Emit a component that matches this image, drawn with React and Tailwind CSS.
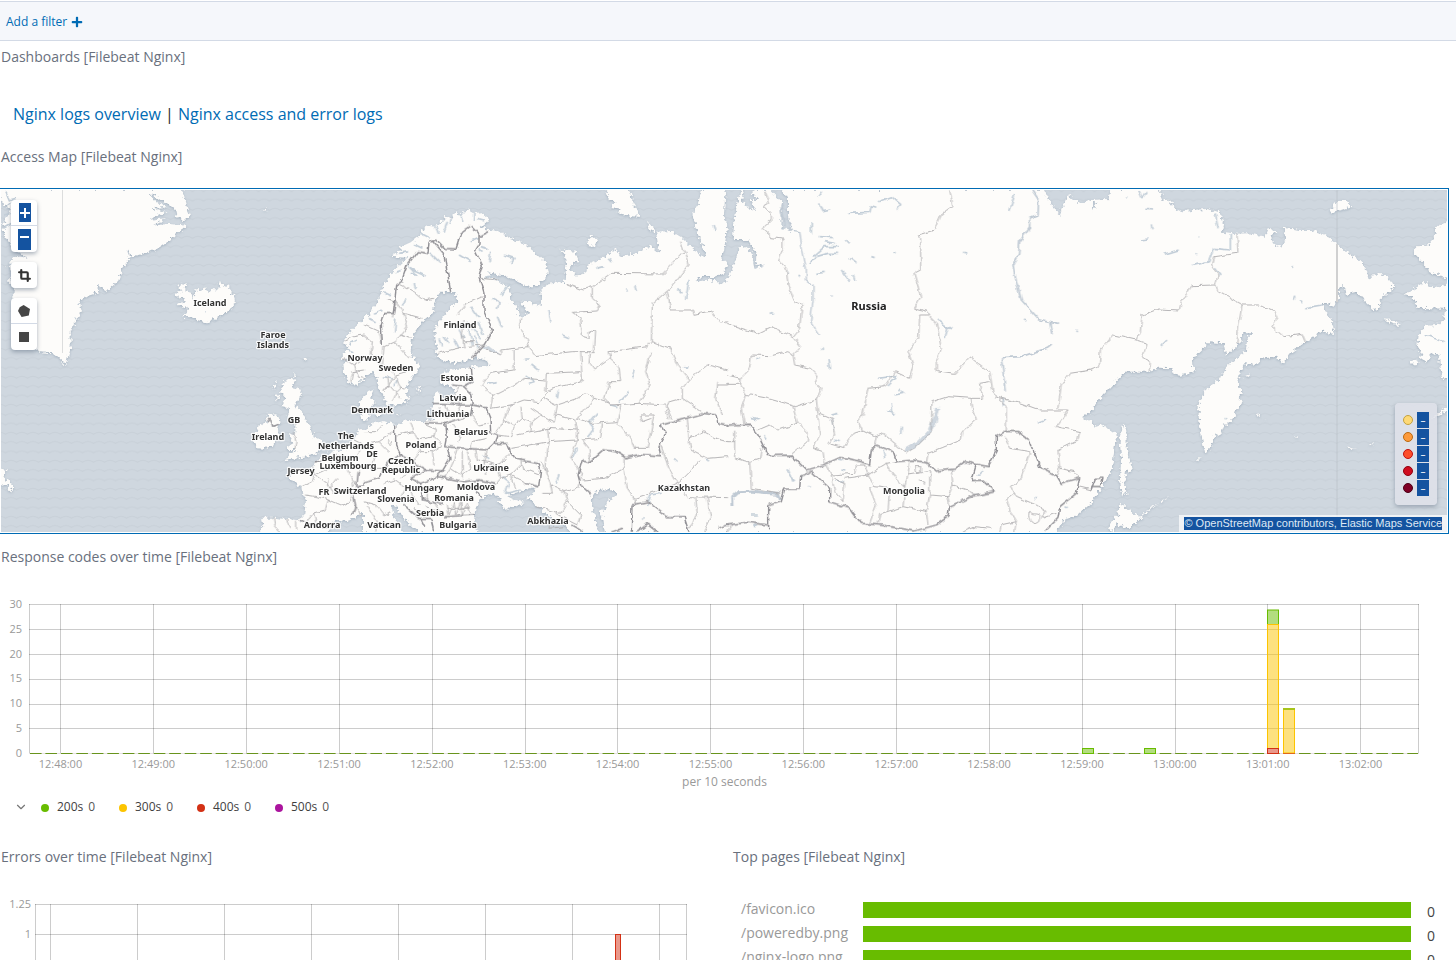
import React from "react";
import { FaPlus } from "react-icons/fa";
import { Crop, ChevronDown } from "lucide-react";

const LAND = [
  [
    "M-3 12 L545 12 L560 60 L570 102 L545 105 L530 92 L524 70 L495 55 L452 25 L462 48 L498 66 L455 70 L500 82 L448 104 L498 100 L456 122 L505 116 L562 122 L522 155 L482 187 L440 205 L395 215 L382 193 L388 222 L370 245 L355 287 L322 318 L290 300 L296 322 L262 332 L238 350 L246 378 L230 405 L212 440 L212 484 L197 540 L175 516 L160 505 L120 502 L100 480 L60 400 L35 332 L48 318 L24 288 L40 270 L22 240 L45 212 L80 218 L40 190 L18 160 L8 120 L30 70 L4 50 Z",
    "M540 293 L560 297 L556 315 L574 320 L578 345 L590 308 L600 322 L612 308 L628 318 L642 308 L652 318 L660 288 L672 305 L688 298 L688 316 L702 330 L705 350 L695 375 L670 384 L650 400 L620 412 L590 405 L575 397 L550 396 L566 372 L545 362 L528 358 L558 348 L525 328 L545 318 L532 303 Z",
    "M855 587 L887 583 L875 606 L906 614 L900 640 L880 664 L900 672 L914 700 L930 725 L942 755 L968 768 L964 792 L945 808 L915 815 L884 818 L850 832 L870 808 L890 795 L862 795 L866 782 L880 775 L866 752 L886 742 L886 708 L862 695 L870 672 L845 665 L856 640 L840 618 Z",
    "M800 690 L832 688 L842 712 L832 724 L836 748 L824 776 L795 792 L772 790 L762 768 L770 742 L776 720 L800 712 Z",
    "M826 590 L830 606 L818 618 Z M788 82 L802 68 L798 78 Z M914 518 L920 522 L915 532 Z M880 564 L886 572 L880 576 Z M830 626 L838 634 L828 650 Z",
    "M1095 398 L1062 430 L1042 452 L1028 470 L1046 488 L1028 508 L1032 560 L1045 592 L1066 602 L1080 590 L1095 582 Z",
    "M1095 636 L1078 650 L1082 680 L1088 705 L1095 712 Z",
    "M1095 733 L1075 738 L1062 764 L1040 792 L1000 800 L962 815 L945 835 L935 856 L905 854 L862 872 L874 886 L904 905 L906 925 L918 946 L912 992 L900 1006 L860 1002 L820 998 L785 998 L790 1020 L778 1045 L982 1045 L990 1022 L1005 1004 L1040 1008 L1060 1000 L1095 980 Z",
    "M-3 850 L20 855 L14 882 L38 895 L35 920 L20 898 L-3 905 Z",
  ],
  [
    "M-3 400 L20 382 L40 350 L60 300 L88 258 L130 218 L80 216 L112 196 L104 188 L140 172 L168 150 L172 134 L200 120 L222 122 L245 95 L262 98 L276 78 L292 92 L310 72 L330 84 L345 78 L376 105 L350 125 L405 140 L440 160 L480 175 L510 200 L545 235 L552 270 L520 302 L490 305 L450 285 L420 272 L372 262 L405 290 L432 305 L440 325 L438 350 L458 360 L465 395 L496 388 L470 350 L500 352 L530 366 L533 312 L560 295 L602 290 L607 240 L600 205 L588 194 L636 200 L642 228 L615 246 L635 272 L665 265 L672 240 L700 228 L740 205 L755 190 L768 215 L815 205 L860 182 L886 206 L876 140 L920 138 L950 155 L975 180 L1015 214 L1025 208 L1010 170 L995 130 L985 85 L1000 60 L1015 12 L1085 12 L1080 90 L1090 120 L1080 200 L1072 220 L1090 235 L1082 262 L1050 276 L1008 276 L998 290 L1040 283 L1070 296 L1095 290 L1095 1045 L722 1045 L718 1000 L703 977 L722 972 L730 950 L755 935 L752 912 L700 915 L680 948 L690 985 L706 1045 L622 1045 L600 1020 L560 1000 L520 962 L490 940 L510 920 L514 906 L470 918 L430 935 L450 945 L482 955 L440 965 L425 978 L405 950 L410 940 L385 925 L350 940 L335 970 L330 1010 L342 1045 L172 1045 L150 1030 L120 1000 L100 970 L82 958 L90 1000 L120 1045 L-3 1045 L-3 738 L30 715 L60 708 L95 720 L130 704 L180 712 L213 700 L205 670 L210 640 L217 615 L240 642 L270 625 L264 604 L228 595 L235 565 L270 553 L325 546 L375 540 L365 522 L330 520 L275 535 L245 530 L215 515 L218 480 L210 440 L225 410 L250 380 L280 350 L275 322 L230 320 L212 345 L207 385 L175 410 L145 450 L140 500 L152 520 L168 552 L145 575 L130 602 L130 640 L110 660 L72 662 L60 640 L45 610 L40 578 L24 560 L-3 585 Z",
    "M-3 638 L12 618 L28 612 L22 640 L32 650 L10 680 L20 700 L-3 712 Z M36 676 L56 672 L52 694 L34 692 Z M160 606 L172 602 L162 630 Z M132 636 L136 636 L128 662 Z M96 686 L106 690 L98 694 Z",
    "M725 12 L735 45 L755 50 L742 66 L770 72 L762 84 L796 92 L828 96 L810 60 L795 12 Z M670 165 L685 150 L702 166 L690 186 L674 184 Z M850 108 L876 132 L868 140 L852 128 Z",
  ],
  [
    "M40 12 L30 45 L20 100 L14 165 L60 165 L85 205 L84 235 L105 243 L80 252 L70 202 L40 180 L30 200 L20 240 L-3 282 L-3 1045 L985 1045 L1010 1004 L1050 990 L1095 950 L1095 705 L1062 700 L1095 674 L1095 45 L1050 54 L1020 30 L1008 60 L995 92 L965 50 L945 12 L160 12 L180 40 L180 95 L192 138 L160 130 L162 50 L125 12 L86 12 L70 22 L90 45 L66 45 L84 75 L60 70 L40 45 L50 12 Z",
  ],
  [
    "M-3 90 L12 55 L-3 45 L50 42 L55 12 L200 12 L215 45 L232 44 L258 80 L300 75 L345 72 L380 82 L396 110 L390 140 L430 146 L470 145 L520 155 L530 130 L545 130 L556 142 L535 150 L545 178 L570 186 L580 165 L575 125 L620 135 L660 135 L700 150 L740 180 L770 205 L800 225 L825 255 L830 288 L850 265 L880 270 L908 305 L885 325 L862 345 L866 370 L845 376 L820 352 L810 335 L795 320 L765 327 L755 300 L740 305 L742 340 L725 362 L690 355 L705 388 L718 400 L728 444 L690 440 L640 472 L600 500 L570 536 L555 515 L505 522 L490 540 L460 535 L445 560 L436 590 L448 620 L440 640 L450 655 L430 680 L425 705 L395 720 L385 745 L365 755 L360 785 L340 806 L330 760 L320 700 L320 655 L345 610 L380 585 L410 540 L462 498 L465 460 L480 445 L450 445 L445 475 L402 512 L395 475 L350 472 L320 500 L300 530 L308 558 L265 572 L245 565 L240 550 L200 548 L165 560 L100 560 L60 602 L-3 670 Z",
    "M-3 730 L30 718 L56 735 L75 748 L68 785 L60 850 L40 890 L-3 955 Z",
    "M95 715 L103 740 L105 800 L123 855 L102 862 L96 905 L112 930 L98 922 L90 938 L84 880 L88 820 L82 760 Z",
    "M85 952 L110 975 L145 995 L135 1010 L105 1032 L70 1015 L66 1045 L48 1032 L65 1000 L78 990 Z",
    "M1072 108 L1045 118 L1030 132 L1025 160 L1005 182 L970 184 L968 206 L1000 240 L1015 265 L1040 268 L1072 285 Z",
    "M942 326 L1005 288 L1012 308 L1072 298 L1072 372 L975 368 L964 340 Z",
    "M1072 374 L1058 385 L1055 405 L1035 420 L1000 422 L980 450 L975 490 L990 500 L984 520 L1004 532 L1020 500 L1040 512 L1045 545 L1050 582 L1072 575 Z",
    "M713 78 L735 48 L765 48 L778 65 L750 74 L715 83 Z M875 403 L900 405 L928 420 L905 418 Z M950 530 L975 526 L980 536 L960 540 Z M460 572 L474 568 L464 578 Z M1010 705 L1055 670 L1072 675 L1040 690 Z M492 682 L504 692 L502 700 Z M520 700 L528 706 L518 704 Z M610 752 L620 758 L612 758 Z M768 788 L796 788 L772 792 Z M830 778 L850 774 L836 780 Z M312 830 L330 812 L316 832 Z M140 998 L200 952 L150 998 Z M205 950 L230 934 L210 952 Z",
  ],
];

const NATIONAL = [
  "M800 712 L810 700 L818 724 L836 718 M945 835 L975 820 L1010 815 L1040 812 M1075 860 L1070 905 L1092 902 M1060 925 L1066 960 L1058 990 M900 1006 L940 1020 L985 1030",
  "M55 480 L52 420 L62 385 L88 385 L98 300 L112 290 L130 240 L160 200 L192 205 L195 172 L215 165 L240 190 L275 192 L290 145 L322 122 L345 145 L345 175 L332 195 L355 240 L345 275 L360 325 L360 380 L385 435 L360 480 L322 518 M205 168 L240 210 L252 270 L260 322 M345 155 L375 140 M322 545 L325 590 L300 605 L320 625 L325 660 L365 668 L378 700 L380 742 L400 750 L390 775 L430 775 L440 800 L455 822 L520 835 L530 855 L524 905 L485 895 M265 600 L300 605 M205 655 L240 655 L290 660 L325 660 M180 712 L245 715 L250 760 L245 785 L370 795 L390 775 M245 715 L290 700 L320 690 L325 660 M95 722 L95 780 L110 810 L190 855 L235 858 L258 820 L250 790 M110 810 L72 830 L45 880 L-3 895 M190 855 L140 880 L170 895 L225 875 L300 890 L345 885 L330 905 L350 935 M235 858 L215 880 M170 895 L175 945 L240 955 M240 995 L330 990 M115 955 L165 1000 L200 1000 L210 1041 M170 1000 L180 1020 M345 885 L395 895 M622 1020 L660 1041 M1092 720 L1062 715 L1055 690 L1020 685 L890 722 L905 745 L885 785 L890 812 L830 808 L785 818 L755 800 L720 795 L680 830 L655 825 L642 870 L650 900 L682 930 M802 1041 L804 960 L850 950 L910 995 L960 995 L975 1041 M745 1041 L780 1028 M820 1041 L850 1018 L880 1041 M1060 1030 L1092 1020",
  "M-3 720 L65 718 L90 750 L120 812 L190 810 L235 855 L285 840 L335 818 L360 820 L425 838 L430 795 L445 780 L495 800 L505 830 L560 825 L600 835 L625 858 L680 852 L710 830 L745 838 L780 845 L805 800 L805 755 L830 740 L870 740 L905 765 L935 845 L985 870 L1000 895 L1055 878 L1045 925 L995 965 L990 1000 L950 1040 M745 838 L730 890 L765 888 L800 920 L730 935 L665 965 L660 995 L625 1020 L560 1038 L460 1020 L400 1015 L365 970 L305 950 L305 910 L250 858 L218 870 L215 912 L170 912 L160 950 L122 962 L122 1030 M-3 1020 L60 1012 L122 1020",
  "M-3 915 L10 880 L30 880 L25 905 L-3 905",
];

const REGIONAL = [
  "M1035 465 L1060 455 L1092 450 M1030 520 L1060 540 L1092 520 M1052 590 L1058 560 L1092 555 M1062 540 L1075 575 L1092 580 M880 745 L888 770 L884 795 M880 705 L888 720 M938 842 L945 870 L990 850 L995 820 M905 905 L935 890 L945 870 L985 900 L1000 925 L1045 920 L1065 890 L1040 850 L1000 850 M918 930 L950 935 L985 945 L975 975 L940 985 L920 1010 M985 945 L1020 960 L1055 950 L1050 925 M990 905 L1010 880 M820 998 L825 1025 L840 1041 M860 1002 L870 1030 M890 1010 L890 1035 M1000 800 L1020 830 L1060 830 L1080 800 M1060 764 L1092 780 M940 985 L950 1020 M985 880 L980 905 M1066 960 L1085 990",
  "M105 298 L150 320 L180 345 L210 340 M70 345 L95 350 L120 385 L175 400 M95 350 L85 400 M120 385 L130 425 L110 450 L140 460 M60 485 L95 470 L110 450 M60 485 L55 540 L95 570 L130 560 M95 470 L135 520 M0 420 L45 440 L55 480 M0 450 L25 470 L20 520 L55 540 M60 620 L95 570 L110 610 L125 612 M75 600 L110 640 M70 575 L75 600 L60 620 M85 650 L95 625 L110 610 M280 390 L310 355 L355 335 M300 405 L295 450 L300 490 M220 505 L260 495 L300 485 L360 480 M300 470 L330 470 M350 280 L405 285 M605 295 L655 315 L685 305 L740 265 L895 267 L960 200 L950 170 M965 200 L975 240 L920 310 L865 355 L862 470 L850 485 L735 500 L740 520 L690 555 L675 535 L680 500 M685 305 L685 340 L708 360 L700 378 L625 382 L650 400 L655 455 L675 460 L675 438 L692 440 L688 500 L625 500 L515 512 L495 485 L410 495 L410 510 L365 495 M910 320 L920 375 L985 375 L990 388 L1040 378 L1070 415 L1092 410 M470 400 L465 430 L490 460 L495 485 M862 470 L920 490 L945 545 L975 585 L1030 540 L1092 555 M862 500 L845 560 L858 600 L825 655 M975 585 L955 610 L955 640 L920 650 L905 680 L915 700 M955 640 L1020 685 M735 520 L765 545 L770 590 L735 590 L722 640 L740 660 L825 655 L905 660 L925 705 M650 500 L655 590 L560 610 L545 620 L550 565 L650 560 M450 495 L450 555 L380 565 L355 600 L385 635 L455 600 L480 580 M385 635 L380 670 L440 660 L480 645 L525 650 L560 615 M480 580 L545 585 M440 660 L420 705 L395 745 M420 705 L450 725 L475 700 L470 665 M450 725 L440 755 L400 750 M475 700 L505 710 L500 740 L460 750 M505 710 L530 690 L500 670 M530 690 L570 715 L580 660 L540 640 M500 740 L550 730 L555 770 L440 790 M550 730 L640 735 L640 765 L555 770 M640 735 L635 705 L575 690 M580 660 L640 640 L665 625 L690 640 L640 700 L680 715 L760 710 L770 660 M690 640 L740 655 M760 710 L800 760 L810 790 L850 790 L870 690 L830 690 L835 710 L862 700 M715 715 L710 760 L655 765 L675 790 L680 830 M640 765 L620 820 L655 870 L640 910 L600 920 L560 900 L545 860 L550 800 L555 770 M550 860 L530 830 M560 900 L565 925 L535 925 M600 920 L610 950 L590 985 L515 965 M610 950 L650 990 L640 1020 L600 1000 M655 885 L725 880 L780 850 L780 820 M780 850 L790 910 L812 940 L885 915 L940 895 L1005 830 M890 780 L915 850 L940 895 L970 935 L1092 938 M970 700 L975 760 L1020 740 L1055 760 L1092 770 M975 760 L980 795 L1030 820 L1092 815 M995 938 L1000 990 L975 1030 M1030 938 L1040 1000 L1020 1041 M812 940 L815 960 M1062 590 L1055 640 L1075 690 M1062 600 L1092 600 M285 605 L270 640 L290 660 L280 680 M225 670 L235 690 L250 700 M245 655 L255 695 M320 690 L345 720 L370 715 M265 720 L290 760 L280 770 M320 795 L325 770 L370 760 M100 750 L150 740 L160 765 L210 755 L215 730 L180 715 M150 740 L140 710 M160 765 L170 800 L145 830 M210 755 L235 780 L205 800 L210 840 M170 800 L205 800 M0 740 L40 740 L55 720 M0 780 L45 770 L75 800 M45 770 L90 740 M40 800 L20 850 L60 850 M75 765 C65 775 80 780 82 768 M100 830 L130 860 L110 880 M280 790 L260 850 L290 870 M295 800 L295 880 M310 800 L320 850 L295 870 M260 850 L240 880 M370 795 L360 830 L400 840 L430 820 M335 795 L340 825 L360 830 L365 870 M440 800 L400 840 M440 870 L470 840 M470 826 L475 850 L525 870 M400 840 L410 880 L440 870 L485 895 M60 895 L90 885 L125 910 L110 940 M0 925 L40 915 M0 950 L35 960 L60 990 L80 980 M10 960 L40 1010 L35 1040 M190 905 L190 950 M140 920 L165 960 M250 960 L255 990 L270 950 L275 990 L290 950 L295 990 L310 955 L320 985 M185 965 L230 980 M205 945 L225 975 M250 970 L320 970 M150 970 L185 990 M560 1000 L555 1030 L600 1025 M575 985 L600 1000 M410 880 L385 910 M440 870 L455 910",
  "M110 20 L122 55 L105 65 L130 90 L130 105 L102 132 L130 158 L165 162 L165 190 L152 225 L175 250 L180 300 L200 350 L222 358 L215 430 L195 455 L220 485 L195 510 L200 540 L250 550 L270 570 L262 595 L280 610 L265 645 L200 665 L170 655 L110 638 L55 628 L38 600 L40 575 L65 550 L70 510 L130 512 L180 500 L195 510 M-3 415 L40 430 L90 445 L130 425 L195 455 M-3 570 L38 580 M-3 598 L35 598 M55 628 L40 670 L48 715 M195 665 L210 715 L150 735 L125 720 L90 735 M210 715 L240 745 L238 770 L190 808 M265 645 L270 690 L275 750 L255 790 L285 800 L290 835 M275 685 L310 700 L320 750 L300 775 L345 788 L375 745 L405 735 L445 755 L440 780 M400 735 L390 710 L405 690 L420 610 L470 605 L500 560 L545 580 L555 540 L540 500 L572 460 L575 390 L605 390 L600 380 L560 370 L578 335 L558 265 L578 255 L578 160 L570 150 L620 135 L640 90 L675 65 L665 15 M605 395 L625 415 L640 490 L625 530 L625 560 L680 568 L725 515 L770 550 L785 560 L795 620 L835 665 L835 740 M445 755 L465 745 L535 805 L570 780 L610 740 L612 650 L660 635 L730 640 L735 680 L748 700 L705 740 L700 765 L600 805 L595 835 M730 640 L760 640 L755 595 L785 590 M800 635 L880 655 L935 675 L1020 675 L985 725 L1055 740 L1050 765 L990 795 L995 850 L985 870 M990 670 L1000 600 L1025 565 L1092 555 M995 850 L1040 860 L1055 878 M20 740 L20 820 L60 830 L95 820 L100 790 M65 830 L70 910 L160 925 M-3 770 L20 770 M295 840 L310 870 L380 865 L385 840 L410 840 M310 870 L320 920 L345 950 M320 880 L350 895 L345 950 M350 880 L420 870 L440 905 L485 910 L480 980 L455 985 L450 1020 M440 905 L425 910 L445 960 L425 1015 M410 840 L420 870 L475 835 L495 870 L530 905 L540 870 L600 860 M475 835 L505 830 M540 870 L545 830 M530 905 L525 965 L480 980 M525 965 L595 980 L600 1020 M605 855 L605 930 L595 980 M605 930 L660 935 L665 965 M660 935 L675 900 L670 855 M675 900 L720 915 L740 930 M560 845 L578 845 L578 860 L562 860 Z M570 885 L590 888 L588 898 M830 755 L845 790 L905 800 L880 880 L850 905 L860 925 L835 945 L850 985 L865 1010 L860 1041 M860 925 L865 935 L925 960 L950 975 L945 1000 L985 985 M865 1010 L820 1020 L815 1041 M705 1041 L740 1025 L790 1030 M910 975 C890 990 910 1030 935 1010 C950 970 900 1000 910 975 M1092 915 L1050 905 M-3 1041 L10 1020",
  "M435 145 L438 205 L365 215 L358 240 L378 270 L370 300 L300 302 L268 350 L262 375 L200 372 L150 390 L145 440 L132 465 L65 450 L25 495 L22 545 L-3 555 M132 465 L165 475 L150 520 L175 530 L172 558 M370 300 L378 320 L450 360 L440 420 L435 475 M450 360 L500 360 L545 380 L555 400 L540 425 L575 455 L630 448 L640 472",
];

const LAKES = [
  "M1034 490 L1060 500 M1032 530 L1052 524 M1045 478 L1070 465 M615 376 L616 382 M20 60 L40 50 M12 90 L36 84 M10 130 L32 118 M25 240 L50 235 L60 250 M30 265 L55 275 M18 20 L28 45 L48 40 M250 350 L236 356 M225 400 L238 402",
  "M130 235 L150 255 L185 270 M140 265 L155 270 M150 295 L155 310 M125 340 L115 365 M95 400 L92 440 M100 580 L90 605 M60 575 L85 582 M200 205 L230 235 M285 210 L320 230 M345 190 L355 200 M320 170 L345 160 M380 200 L375 235 M420 210 L450 220 L440 235 M350 185 L370 190 M435 300 L410 330 M385 340 L405 350 L400 375 M400 395 L415 430 M360 280 L395 275 M320 365 L345 400 M310 410 L325 480 M325 425 L350 460 M345 410 L358 450 M330 450 L345 490 M240 455 L255 475 M285 430 L300 460 M225 460 L235 485 M270 460 L285 490 M555 375 L560 410 M595 450 L615 458 M480 525 L500 525 M505 540 L525 555 M485 570 L510 590 L495 595 M375 595 L395 590 M583 620 L580 640 M810 550 L805 580 M795 620 L765 650 M760 665 L740 660 M700 685 L675 715 L690 735 L670 760 M640 790 L625 820 M585 870 L575 895 M850 960 L860 930 L890 925 M835 1000 L840 1005 M930 820 L940 830 M1020 822 L1035 828 M815 300 L820 315 M785 310 L790 320 M960 545 L970 548 M975 285 L965 345 M940 310 L955 325 M1050 120 L1055 135 M700 250 L720 245 M735 220 L745 232 M360 810 L372 825 M415 875 L435 890 L425 925 L470 915 M140 250 L160 275 M105 205 L135 200 M150 178 L175 190 M170 145 L200 160 M215 125 L225 150 M262 98 L258 120 M292 92 L296 112 M330 84 L328 105 M250 110 L240 140 M95 262 L115 255 M60 320 L80 330 M30 385 L55 375 M12 400 L35 410 M360 105 L340 100",
  "M250 115 L250 145 M245 235 L265 215 L300 205 L330 205 M255 215 L290 185 L330 185 M275 155 L315 158 M265 265 L290 262 M340 255 L365 290 M365 220 L385 235 M375 270 L380 285 M430 215 L440 218 M500 200 L505 205 M705 202 L718 204 M125 385 L135 383 M180 260 L182 264 M208 275 L214 275 M310 330 L314 330 M355 165 L365 175 M290 170 L320 175 M640 415 L660 430 L650 460 M650 420 L670 432 M630 405 L645 415 M895 405 L888 402 M1045 435 L1050 437 M450 580 L505 572 M480 600 L505 575 M500 630 L525 625 L510 610 M490 655 L495 690 M475 680 L500 685 M520 725 L518 750 M465 795 L470 820 M330 825 L345 828 M325 885 L345 890 M340 855 L355 858 M750 870 L765 855 M930 715 L955 705 M70 700 L90 705 M110 750 L118 762 M180 850 L195 890 M185 875 L200 888 M240 905 L248 905 M70 990 L90 990 M75 1022 L90 1020 M925 940 L920 942 M1010 965 L1016 968 M310 690 L330 685 M318 765 L332 770 M85 520 L95 522 M280 490 L284 495 M300 525 L305 550 M280 20 L270 35 M275 55 L285 80 L310 75 M360 85 L425 82 L430 65 L445 70 M450 50 L490 35 L515 55 L505 75 M860 30 L845 75",
  "M160 70 L185 72 M178 115 L180 130 M145 165 L168 162 M215 208 L260 195 M300 242 L350 230 L365 190 L415 195 L415 150 M210 480 L225 465 M600 243 L602 246 M605 345 L612 332 M625 345 L632 355 M640 372 L660 365 L690 360 M370 250 L385 270 M370 85 L378 130 M398 700 L402 702 M310 210 L312 208 M1000 450 L1055 470 M105 35 L108 38 M140 15 L150 38 L165 20 M320 155 L322 156",
];

const LABELS = [
  ["Iceland", 210, 306], ["Faroe", 273, 338], ["Islands", 273, 348],
  ["Norway", 365, 361], ["Sweden", 396, 371], ["Finland", 460, 328],
  ["Estonia", 457, 381], ["Latvia", 453, 401], ["Lithuania", 448, 417],
  ["Belarus", 471, 435], ["Denmark", 372, 413], ["GB", 294, 423],
  ["Ireland", 268, 440], ["The", 346, 439], ["Netherlands", 346, 449],
  ["DE", 372, 457], ["Poland", 421, 448], ["Belgium", 340, 461],
  ["Luxembourg", 348, 469], ["Czech", 401, 464], ["Republic", 401, 473],
  ["Ukraine", 491, 471], ["Jersey", 301, 474], ["FR", 324, 495],
  ["Switzerland", 360, 494], ["Hungary", 424, 491], ["Moldova", 476, 490],
  ["Slovenia", 396, 502], ["Romania", 454, 501], ["Serbia", 430, 516],
  ["Andorra", 322, 528], ["Vatican", 384, 528], ["Bulgaria", 458, 528],
  ["Abkhazia", 548, 524], ["Kazakhstan", 684, 491], ["Mongolia", 904, 494],
];

function MapDrawing() {
  return (
    <svg
      className="block h-full w-full font-['Noto_Sans','Open_Sans',sans-serif]"
      viewBox="1 190 1446 342"
      preserveAspectRatio="xMidYMid slice"
      role="img"
      aria-label="Access map"
    >
      <defs>
        <pattern id="waves" width="11" height="9.33" patternUnits="userSpaceOnUse">
          <rect width="11" height="9.33" fill="#cfd7df" />
          <path d="M0 3 Q2.75 3.2 5.5 5 Q8.25 3.2 11 3" fill="none" stroke="#c8d0d8" strokeWidth="1.1" />
        </pattern>
        <filter id="coast" filterUnits="userSpaceOnUse" x="-10" y="180" width="1480" height="365" colorInterpolationFilters="sRGB">
          <feTurbulence type="fractalNoise" baseFrequency="0.28" numOctaves="2" seed="7" result="n" />
          <feDisplacementMap in="SourceGraphic" in2="n" scale="7" xChannelSelector="R" yChannelSelector="G" result="land" />
          <feDropShadow in="land" dx="0" dy="1" stdDeviation="1.2" floodColor="#8fa0b0" floodOpacity="0.6" />
        </filter>
        <filter id="wiggle" filterUnits="userSpaceOnUse" x="-10" y="180" width="1480" height="365" colorInterpolationFilters="sRGB">
          <feTurbulence type="fractalNoise" baseFrequency="0.14" numOctaves="2" seed="4" result="w" />
          <feDisplacementMap in="SourceGraphic" in2="w" scale="5" xChannelSelector="R" yChannelSelector="G" />
        </filter>
      </defs>
      <rect x="-400" y="0" width="2400" height="800" fill="url(#waves)" />
      <g filter="url(#coast)">
        <g transform="translate(0 185) scale(0.33333)" fill="#fdfcfa">
          {LAND.map((paths, i) => (
            <g key={i} transform={`translate(${i * 1092} 0)`}>
              {paths.map((d) => <path key={d} d={d} />)}
            </g>
          ))}
        </g>
      </g>
      <g filter="url(#wiggle)">
        <g transform="translate(0 185) scale(0.33333)" fill="none" strokeLinejoin="round">
          {LAKES.map((d, i) => (
            <path key={i} d={d} transform={`translate(${i * 1092} 0)`} stroke="#c3ced8" strokeWidth="5" />
          ))}
          <g transform="translate(2184 0)" stroke="#c0cad4">
            <path d="M185 135 L215 140 L222 190 L235 250 L235 285 L255 300 L255 350 L248 410 L275 450" strokeWidth="4" />
            <path d="M915 15 L932 40 L930 90 L905 100 L905 125 L875 170 L872 210 L855 240 L865 290 L880 345 L935 405 L990 418 M965 412 L972 445 M968 480 L955 490 L880 515 L820 518 M820 520 L825 560 L832 620 M825 640 L830 665" strokeWidth="5" />
            <path d="M625 670 L635 670 L625 712 L600 752 L560 790 L530 800 L535 788 L570 768 L600 735 L616 700 Z" fill="#cfd7df" strokeWidth="2" />
            <path d="M15 960 L14 935 L30 920 L70 918 L100 922 L150 925 L158 945" strokeWidth="9" />
            <path d="M165 60 C150 90 175 90 170 120" strokeWidth="6" />
            <path d="M310 700 L318 740" strokeWidth="4" />
          </g>
          <path d="M1446 485 L1462 480 L1500 510 L1470 500 Z" fill="#cfd7df" />
          {REGIONAL.map((d, i) => (
            <path key={i} d={d} transform={`translate(${i * 1092} 0)`} stroke="#b0afb2" strokeWidth="2.8" />
          ))}
          {NATIONAL.map((d, i) => (
            <path key={i} d={d} transform={`translate(${i * 1092} 0)`} stroke="#929196" strokeWidth="4.4" />
          ))}
        </g>
      </g>
      <path d="M62.5 190 V353" stroke="#dcdddd" />
      <path d="M1337 190 V532" stroke="#b9c1c8" strokeOpacity="0.7" />
      <path d="M1337 244 V302" stroke="#d0d0d0" strokeWidth="2" />
      <g fontSize="9" fontWeight="700" fill="#333" stroke="#fff" strokeWidth="2.4" strokeOpacity="0.85" strokeLinejoin="round" paintOrder="stroke" textAnchor="middle">
        {LABELS.map(([name, x, y]) => (
          <text key={name} x={x} y={y}>{name}</text>
        ))}
        <text x="869" y="310" fontSize="11" fill="#222">Russia</text>
      </g>
    </svg>
  );
}

const controlGroup = "flex w-[26px] flex-col overflow-hidden rounded bg-white shadow-[0_2px_4px_rgba(90,105,125,0.5)]";
const controlButton = "flex h-[26px] items-center justify-center";

function MapControls() {
  return (
    <div className="absolute top-[10px] left-[10px] flex flex-col gap-[10px]">
      <div className={controlGroup}>
        <button aria-label="Zoom in" className={controlButton + " border-b border-[#d3dae6]"}>
          <span className="ml-[2px] flex h-[19px] w-3 items-center justify-center bg-[#1453a0] text-white">
            <svg width="12" height="12" viewBox="0 0 12 12" aria-hidden="true"><path d="M6 1V11M1 6H11" stroke="currentColor" strokeWidth="2" /></svg>
          </span>
        </button>
        <button aria-label="Zoom out" className={controlButton}>
          <span className="flex h-[21px] w-[13px] items-center justify-center bg-[#1453a0] text-white">
            <svg width="13" height="12" viewBox="0 0 13 12" aria-hidden="true"><path d="M2 4H11" stroke="currentColor" strokeWidth="2" /></svg>
          </span>
        </button>
      </div>
      <div className={controlGroup}>
        <button aria-label="Fit data bounds" className={controlButton}>
          <Crop size={13} strokeWidth={4} color="#333" aria-hidden="true" />
        </button>
      </div>
      <div className={controlGroup}>
        <button aria-label="Draw a polygon" className={controlButton + " border-b border-[#d3dae6]"}>
          <svg width="12" height="12" viewBox="0 0 12 12" aria-hidden="true"><path d="M5.6 0L12 4L10.8 10.600L3.600 12L0 6L1.700 2.200Z" fill="#464646" /></svg>
        </button>
        <button aria-label="Draw a rectangle" className={controlButton}>
          <svg width="10" height="10" viewBox="0 0 10 10" aria-hidden="true"><rect width="10" height="10" fill="#464646" /></svg>
        </button>
      </div>
    </div>
  );
}

const HEAT = [
  ["#fed976", "#c2a040"], ["#fd9a3c", "#b96a10"], ["#fc4e2a", "#c01010"], ["#d00d20", "#90000f"], ["#800026", "#4c0016"],
];

function MapPanel() {
  return (
    <div className="mt-[15px] mr-[7px] h-[346px] border-y border-r border-[#006bb4] p-px">
      <div className="relative h-full overflow-hidden">
        <MapDrawing />
        <MapControls />
        <ul className="absolute right-[10px] bottom-[27px] flex h-[102px] w-[42px] flex-col justify-center gap-px rounded bg-[#dfe2ea]/85 pl-2 shadow-[0_2px_4px_rgba(90,105,125,0.45)]">
          {HEAT.map(([fill, edge]) => (
            <li key={fill} className="flex items-center gap-1">
              <svg width="10" height="10" viewBox="0 0 10 10" aria-hidden="true"><circle cx="5" cy="5" r="4.500" fill={fill} stroke={edge} /></svg>
              <span className="h-4 w-3 bg-[#1453a0] text-center font-['Open_Sans',sans-serif] text-[10px] leading-4 text-white">–</span>
            </li>
          ))}
        </ul>
        <div className="absolute right-0 bottom-0 bg-white/70 px-[5px] py-[2px] font-['Liberation_Sans',sans-serif] text-[11px] leading-[13px] text-[#dfe9f5]">
          <span className="block bg-[#1453a0]">
            © <a href="#osm">OpenStreetMap contributors</a>, <a href="#ems">Elastic Maps Service</a>
          </span>
        </div>
      </div>
    </div>
  );
}

const Title = ({ children }) => (
  <h2 className="h-8 pl-px text-[14px] leading-8 text-[#69707d]">{children}</h2>
);

const TICKS = Array.from({ length: 15 }, (_, i) => i);
const tickX = (i) => Math.floor(31.9 + i * 92.85) + 0.5;
const timeLabel = (i) => (i < 12 ? `12:${48 + i}:00` : `13:0${i - 12}:00`);

function ResponsePlot() {
  return (
    <svg className="block h-[150px] w-full" viewBox="0 0 1390 150" preserveAspectRatio="none" role="img" aria-label="Response codes over time">
      <g stroke="#000" strokeOpacity="0.2" fill="none">
        {[0, 25, 50, 75, 100, 124].map((y) => <path key={y} d={`M0 ${y + 0.5}H1390`} />)}
        {TICKS.map((i) => <path key={i} d={`M${tickX(i)} 0V150`} />)}
        <path d="M0.500 0V150M1389.500 0V150" />
      </g>
      <path d="M0 149.500H1390" stroke="#e6e0e4" />
      <path d="M1 149.500H1389" stroke="#68bc00" strokeDasharray="11.5 3.976" />
      <path d="M1 149.500H1389" stroke="#6b4b52" strokeOpacity="0.35" strokeDasharray="11.5 3.976" />
      <g fill="#68bc00" fillOpacity="0.5" stroke="#68bc00">
        <rect x="1053.5" y="144.500" width="11" height="5" />
        <rect x="1115.5" y="144.500" width="11" height="5" />
        <rect x="1238.5" y="6" width="11" height="14.500" />
      </g>
      <g fill="#fcc400" fillOpacity="0.5" stroke="#fcc400">
        <rect x="1238.5" y="20.500" width="11" height="124" />
        <rect x="1254.5" y="105" width="11" height="44" />
      </g>
      <path d="M1254 105H1266" stroke="#a8c41a" strokeWidth="2" />
      <path d="M1254 149.500H1266" stroke="#e0681a" />
      <rect x="1238.5" y="144.500" width="11" height="5" fill="#d33115" fillOpacity="0.5" stroke="#d33115" />
    </svg>
  );
}

const SERIES = [["200s", "bg-[#68bc00]"], ["300s", "bg-[#fcc400]"], ["400s", "bg-[#d33115]"], ["500s", "bg-[#ab149e]"]];

function ResponseChart() {
  return (
    <div className="pt-[23px]">
      <div className="flex pr-[37px]">
        <ul className="flex h-[165px] w-[29px] flex-col justify-between pr-[7px] text-right text-[11px] leading-4 text-[#999]">
          {[30, 25, 20, 15, 10, 5, 0].map((v) => <li key={v}>{v}</li>)}
        </ul>
        <div className="min-w-0 flex-1 pt-2"><ResponsePlot /></div>
      </div>
      <ul className="-mt-[5px] grid grid-cols-15 pr-[49px] pl-[14px] text-center text-[11px] leading-4 text-[#999]">
        {TICKS.map((i) => <li key={i}>{timeLabel(i)}</li>)}
      </ul>
      <p className="mt-[2px] pr-[7px] text-center text-[12px] leading-4 text-[#999]">per 10 seconds</p>
      <div className="mt-[9px] flex h-4 items-center pl-[14px] text-[12px] leading-4 text-[#3f3f3f]">
        <button aria-label="Toggle legend" className="mr-[13px]"><ChevronDown size={14} strokeWidth={2} color="#777" /></button>
        {SERIES.map(([name, dot]) => (
          <button key={name} className="flex w-[78px] items-center">
            <span className={"mt-[2px] mr-2 size-2 rounded-full " + dot} />
            <span>{name}</span>
            <span className="ml-[5px] text-[#555]">0</span>
          </button>
        ))}
      </div>
    </div>
  );
}

function ErrorsChart() {
  return (
    <div className="flex pt-[23px] pr-[37px]">
      <ul className="flex w-[35px] flex-col gap-[14px] pr-1 text-right text-[11px] leading-4 text-[#999]">
        <li>1.25</li><li>1</li><li>0.75</li>
      </ul>
      <div className="min-w-0 flex-1 pt-2">
        <svg className="block h-[60px] w-full" viewBox="0 0 652 60" preserveAspectRatio="none" role="img" aria-label="Errors over time">
          <g stroke="#000" strokeOpacity="0.2" fill="none">
            <path d="M0 0.500H652M0 30.500H652M0.500 0V60M651.500 0V60" />
            <path d="M15.500 0V60M102.500 0V60M189.500 0V60M276.500 0V60M363.500 0V60M450.500 0V60M537.500 0V60M624.500 0V60" />
          </g>
          <rect x="580.5" y="30.500" width="5" height="40" fill="#d33115" fillOpacity="0.5" stroke="#d33115" />
        </svg>
      </div>
    </div>
  );
}

function TopPages() {
  return (
    <ul className="flex flex-col gap-2 pt-[29px] pr-5 pl-[9px] text-[14px] text-[#999]">
      {["/favicon.ico", "/poweredby.png", "/nginx-logo.png"].map((page) => (
        <li key={page} className="flex h-4 items-center">
          <span className="w-[122px] pb-[2px] leading-4">{page}</span>
          <span className="h-4 flex-1 bg-[#68bc00]" />
          <span className="w-[25px] pt-1 pl-4 leading-4 text-[#444]">0</span>
        </li>
      ))}
    </ul>
  );
}

export default function App() {
  return (
    <main className="h-screen overflow-hidden bg-white pt-px font-['Open_Sans',sans-serif]">
      <div className="flex h-10 items-center border-y border-[#d3dae6] bg-[#f5f7fb] pt-px pl-[6px]">
        <button className="flex items-center gap-1 text-[12px] leading-4 text-[#006bb4]">
          Add a filter <FaPlus size={12} aria-hidden="true" />
        </button>
      </div>
      <section className="h-[100px]">
        <Title>Dashboards [Filebeat Nginx]</Title>
        <p className="mt-[29px] pl-[13px] text-[16px] leading-6 text-[#2d2d2d]">
          <a href="#overview" className="text-[#006bb4]">Nginx logs overview</a> |{" "}
          <a href="#logs" className="text-[#006bb4]">Nginx access and error logs</a>
        </p>
      </section>
      <section className="h-[400px]">
        <Title>Access Map [Filebeat Nginx]</Title>
        <MapPanel />
      </section>
      <section className="h-[300px]">
        <Title>Response codes over time [Filebeat Nginx]</Title>
        <ResponseChart />
      </section>
      <div className="grid grid-cols-2 gap-2">
        <section>
          <Title>Errors over time [Filebeat Nginx]</Title>
          <ErrorsChart />
        </section>
        <section>
          <Title>Top pages [Filebeat Nginx]</Title>
          <TopPages />
        </section>
      </div>
    </main>
  );
}
